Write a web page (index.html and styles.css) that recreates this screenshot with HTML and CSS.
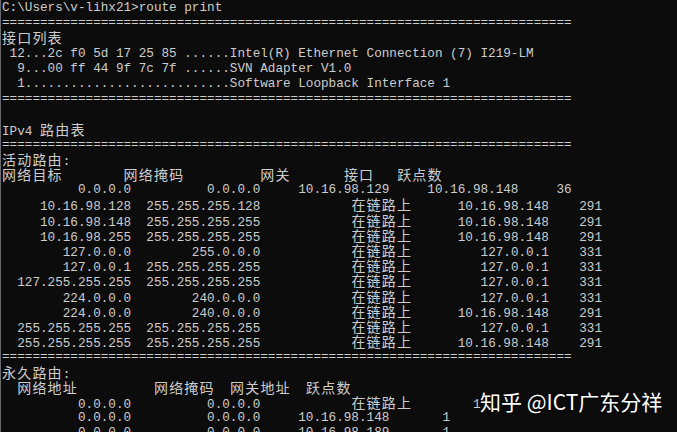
FILE: index.html
```html
<!DOCTYPE html>
<html lang="zh-CN">
<head>
<meta charset="utf-8">
<title>route print</title>
<link rel="stylesheet" href="styles.css">
</head>
<body>
<div class="console">
<div class="ln">C:\Users\v-lihx21&gt;route print</div>
<div class="ln">===========================================================================</div>
<div class="ln"><span class="c">接口列表</span></div>
<div class="ln"> 12...2c f0 5d 17 25 85 ......Intel(R) Ethernet Connection (7) I219-LM</div>
<div class="ln">  9...00 ff 44 9f 7c 7f ......SVN Adapter V1.0</div>
<div class="ln">  1...........................Software Loopback Interface 1</div>
<div class="ln">===========================================================================</div>
<div class="ln"> </div>
<div class="ln">IPv4 <span class="c">路由表</span></div>
<div class="ln">===========================================================================</div>
<div class="ln"><span class="c">活动路由</span>:</div>
<div class="ln"><span class="c">网络目标</span>        <span class="c">网络掩码</span>          <span class="c">网关</span>       <span class="c">接口</span>   <span class="c">跃点数</span></div>
<div class="ln">          0.0.0.0          0.0.0.0     10.16.98.129     10.16.98.148     36</div>
<div class="ln">     10.16.98.128  255.255.255.128            <span class="c">在链路上</span>      10.16.98.148    291</div>
<div class="ln">     10.16.98.148  255.255.255.255            <span class="c">在链路上</span>      10.16.98.148    291</div>
<div class="ln">     10.16.98.255  255.255.255.255            <span class="c">在链路上</span>      10.16.98.148    291</div>
<div class="ln">        127.0.0.0        255.0.0.0            <span class="c">在链路上</span>         127.0.0.1    331</div>
<div class="ln">        127.0.0.1  255.255.255.255            <span class="c">在链路上</span>         127.0.0.1    331</div>
<div class="ln">  127.255.255.255  255.255.255.255            <span class="c">在链路上</span>         127.0.0.1    331</div>
<div class="ln">        224.0.0.0        240.0.0.0            <span class="c">在链路上</span>         127.0.0.1    331</div>
<div class="ln">        224.0.0.0        240.0.0.0            <span class="c">在链路上</span>      10.16.98.148    291</div>
<div class="ln">  255.255.255.255  255.255.255.255            <span class="c">在链路上</span>         127.0.0.1    331</div>
<div class="ln">  255.255.255.255  255.255.255.255            <span class="c">在链路上</span>      10.16.98.148    291</div>
<div class="ln">===========================================================================</div>
<div class="ln"><span class="c">永久路由</span>:</div>
<div class="ln">  <span class="c">网络地址</span>          <span class="c">网络掩码</span>  <span class="c">网关地址</span>  <span class="c">跃点数</span></div>
<div class="ln">          0.0.0.0          0.0.0.0            <span class="c">在链路上</span>        1</div>
<div class="ln">          0.0.0.0          0.0.0.0     10.16.98.148       1</div>
<div class="ln">          0.0.0.0          0.0.0.0     10.16.98.189       1</div>
</div>
<div class="watermark">知乎 @ICT广东分祥</div>
</body>
</html>
```
FILE: styles.css
```css
html, body {
  margin: 0;
  padding: 0;
  background: #0c0c0c;
  width: 677px;
  height: 432px;
  overflow: hidden;
}

.console {
  height: 432px;
  border-left: 1px solid #6a6a6a;
  padding-left: 1px;
  color: #cccccc;
  font-family: "Liberation Mono", "Noto Sans CJK SC", monospace;
  font-size: 12.667px;
  line-height: 15.2px;
  overflow: hidden;
}

.ln {
  height: 15.2px;
  white-space: pre;
}

.c {
  font-family: "Noto Sans CJK SC", sans-serif;
  font-size: 14px;
  letter-spacing: 1.2px;
  line-height: 15.2px;
}

.watermark {
  position: absolute;
  left: 480px;
  top: 389px;
  color: #ffffff;
  font-family: "Noto Sans CJK SC", sans-serif;
  font-size: 21px;
  line-height: 24px;
  white-space: pre;
  text-shadow: 0 0 3px rgba(0, 0, 0, 0.8);
}
```
